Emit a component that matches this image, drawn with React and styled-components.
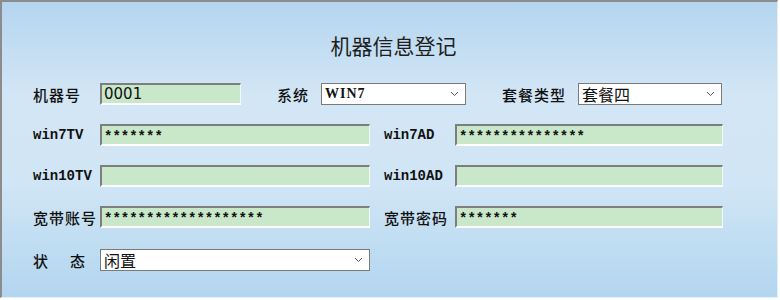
import React from 'react'
import styled, { createGlobalStyle } from 'styled-components'

const GlobalStyle = createGlobalStyle`
  html, body {
    margin: 0;
    padding: 0;
    width: 780px;
    height: 300px;
    overflow: hidden;
  }
`;

const Frame = styled.div`
  box-sizing: border-box;
  width: 778px;
  height: 298px;
  border-top: 2px solid #8c8c8c;
  border-left: 2px solid #8c8c8c;
  border-right: 1px solid #e4eef6;
  border-bottom: 1px solid #e8f0f6;
  background: linear-gradient(to bottom, #b4d5ef 0%, #d3e6f5 32%, #d0e5f5 62%, #b2d6ef 100%);
  font-family: "Noto Sans CJK SC", "Liberation Sans", sans-serif;
  color: #111;
  padding-top: 30px;
`;

const Title = styled.h1`
  margin: 0 0 25px 0;
  height: 26px;
  line-height: 26px;
  text-align: center;
  font-size: 21px;
  font-weight: 400;
  color: #1e1e1e;
  padding-left: 8px;
`;

const Form = styled.div`
  display: flex;
  flex-direction: column;
  gap: 19px;
  padding-left: 31px;
`;

const Row = styled.div`
  display: flex;
  align-items: center;
  height: 22px;
  margin-bottom: ${p => p.$extra || 0}px;
`;

const Label = styled.span`
  width: ${p => p.$w}px;
  margin-left: ${p => p.$ml || 0}px;
  flex-shrink: 0;
  font-size: ${p => p.$latin ? 14 : 15}px;
  letter-spacing: ${p => p.$ls ?? 1}px;
  font-weight: ${p => p.$latin ? 700 : 500};
  white-space: nowrap;
  font-family: ${p => p.$latin ? '"Liberation Mono", monospace' : '"Noto Sans CJK SC", sans-serif'};
`;

const TextBox = styled.div`
  box-sizing: border-box;
  width: ${p => p.$w}px;
  height: 22px;
  background: #c9e8c9;
  border-top: 2px solid #7e7e7e;
  border-left: 2px solid #7e7e7e;
  border-right: 1px solid #f4f8f4;
  border-bottom: 2px solid #ffffff;
  padding-left: 2px;
  display: flex;
  align-items: center;
  font-size: ${p => p.$mask ? 14 : 15}px;
  font-weight: ${p => p.$mask ? 700 : 400};
  font-family: ${p => p.$mask ? '"Liberation Mono", monospace' : '"DejaVu Sans", sans-serif'};
  padding-top: ${p => p.$mask ? 3 : 0}px;
  overflow: hidden;
  white-space: nowrap;
`;

const Select = styled.div`
  box-sizing: border-box;
  width: ${p => p.$w}px;
  height: 22px;
  background: #fff;
  border: 1px solid #7a7a7a;
  display: flex;
  align-items: center;
  justify-content: space-between;
  padding: 0 6px 0 3px;
`;

const SelectText = styled.span`
  font-family: ${p => p.$latin ? '"Liberation Serif", serif' : '"Noto Sans CJK SC", sans-serif'};
  font-weight: ${p => p.$latin ? 700 : 400};
  font-size: ${p => p.$latin ? 14 : 16}px;
  letter-spacing: ${p => p.$latin ? 1 : 0}px;
`;

const Chevron = () => (
  <svg width="9" height="6" viewBox="0 0 9 6">
    <path d="M1 1 L4.5 4.5 L8 1" fill="none" stroke="#555" strokeWidth="1" />
  </svg>
);

const Dropdown = ({ w, value, latin }) => (
  <Select $w={w}>
    <SelectText $latin={latin}>{value}</SelectText>
    <Chevron />
  </Select>
);

const App = () => {
  return (
    <Frame>
      <GlobalStyle />
      <Title>机器信息登记</Title>
      <Form>
        <Row>
          <Label $w={67}>机器号</Label>
          <TextBox $w={141}>0001</TextBox>
          <Label $w={44} $ml={36}>系统</Label>
          <Dropdown w={145} value="WIN7" latin />
          <Label $w={76} $ml={36}>套餐类型</Label>
          <Dropdown w={144} value="套餐四" />
        </Row>
        <Row>
          <Label $w={67} $latin $ls={0}>win7TV</Label>
          <TextBox $w={270} $mask>*******</TextBox>
          <Label $w={71} $ml={14} $latin $ls={0}>win7AD</Label>
          <TextBox $w={268} $mask>***************</TextBox>
        </Row>
        <Row>
          <Label $w={67} $latin $ls={0}>win10TV</Label>
          <TextBox $w={270} $mask />
          <Label $w={71} $ml={14} $latin $ls={0}>win10AD</Label>
          <TextBox $w={268} $mask />
        </Row>
        <Row $extra={2}>
          <Label $w={67}>宽带账号</Label>
          <TextBox $w={270} $mask>*******************</TextBox>
          <Label $w={71} $ml={14}>宽带密码</Label>
          <TextBox $w={268} $mask>*******</TextBox>
        </Row>
        <Row>
          <Label $w={67} $ls={22}>状态</Label>
          <Dropdown w={270} value="闲置" />
        </Row>
      </Form>
    </Frame>
  );
};

export default App
